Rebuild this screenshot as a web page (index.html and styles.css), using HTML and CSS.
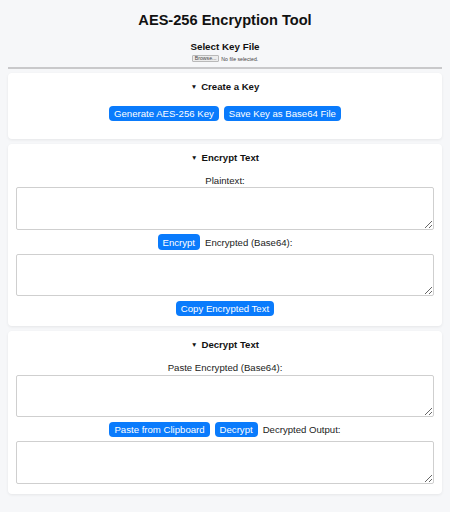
FILE: index.html
```html
<!DOCTYPE html>
<html lang="en">
<head>
<meta charset="utf-8">
<title>AES-256 Encryption Tool</title>
<link rel="stylesheet" href="styles.css">
</head>
<body>
<h1 class="title">AES-256 Encryption Tool</h1>
<h2 class="key-heading">Select Key File</h2>
<div class="file-row">
  <span class="file-btn">Browse...</span>
  <span class="file-status">No file selected.</span>
</div>
<div class="rule"></div>

<details class="card" open>
  <summary class="card-title">Create a Key</summary>
  <div class="row row-create">
    <button class="btn">Generate AES-256 Key</button>
    <button class="btn">Save Key as Base64 File</button>
  </div>
</details>

<details class="card" open>
  <summary class="card-title">Encrypt Text</summary>
  <div class="label">Plaintext:</div>
  <textarea class="box"></textarea>
  <div class="row">
    <button class="btn">Encrypt</button>
    <span class="inline-label">Encrypted (Base64):</span>
  </div>
  <textarea class="box box-after"></textarea>
  <div class="row">
    <button class="btn">Copy Encrypted Text</button>
  </div>
</details>

<details class="card" open>
  <summary class="card-title">Decrypt Text</summary>
  <div class="label">Paste Encrypted (Base64):</div>
  <textarea class="box"></textarea>
  <div class="row">
    <button class="btn">Paste from Clipboard</button>
    <button class="btn">Decrypt</button>
    <span class="inline-label">Decrypted Output:</span>
  </div>
  <textarea class="box box-after"></textarea>
</details>
</body>
</html>
```
FILE: styles.css
```css
html, body {
  margin: 0;
  padding: 0;
}
body {
  background: #f6f7f9;
  padding: 0 8px 8px;
  font-family: "Liberation Sans", Arial, sans-serif;
  font-size: 9.6px;
  color: #111;
}
.title {
  font-size: 14.6px;
  line-height: 17px;
  margin: 12px 0 0;
  text-align: center;
  font-weight: bold;
  color: #111;
}
.key-heading {
  font-size: 9.8px;
  line-height: 11px;
  margin: 11.5px 0 0;
  text-align: center;
  font-weight: bold;
  color: #111;
}
.file-row {
  margin-top: 3.5px;
  display: flex;
  justify-content: center;
  align-items: center;
  gap: 2px;
  font-size: 5.2px;
  line-height: 6px;
  height: 7px;
}
.file-btn {
  border: 1px solid #b9b9b9;
  background: #ececec;
  border-radius: 1px;
  padding: 0 2px;
  color: #444;
  line-height: 5px;
}
.file-status {
  color: #444;
}
.rule {
  margin-top: 5.3px;
  height: 2px;
  background: #c9c9cb;
}
.card {
  display: block;
  background: #fff;
  border-radius: 4px;
  box-shadow: 0 1px 3px rgba(0, 0, 0, 0.07);
  padding: 8px 8px 10px;
  margin-top: 5px;
}
.card:first-of-type {
  margin-top: 4px;
}
.card-title {
  display: block;
  list-style: none;
  font-weight: bold;
  line-height: 11.5px;
  height: 11.5px;
  text-align: center;
  cursor: pointer;
  color: #111;
}
.card-title::-webkit-details-marker {
  display: none;
}
.card-title::before {
  content: "\25BC";
  display: inline-block;
  font-size: 6.5px;
  line-height: 6px;
  margin-right: 4px;
  vertical-align: 1px;
}
.row {
  display: flex;
  justify-content: center;
  align-items: center;
  gap: 5px;
  margin-top: 4.6px;
}
.row-create {
  margin: 13.2px 0 8px;
}
.btn {
  background: #0a7bfc;
  color: #fff;
  border: none;
  border-radius: 4px;
  font-family: "Liberation Sans", Arial, sans-serif;
  font-size: 9.6px;
  line-height: 11px;
  padding: 2.2px 5px;
  margin: 0;
  cursor: pointer;
}
.label {
  margin-top: 10.7px;
  line-height: 11.5px;
  text-align: center;
  color: #222;
}
.inline-label {
  color: #222;
}
.box {
  display: block;
  box-sizing: border-box;
  width: 100%;
  height: 42.4px;
  margin: 1.4px 0 0;
  border: 1px solid #cfcfcf;
  border-radius: 2px;
  background: #fff;
  font-family: "Liberation Sans", Arial, sans-serif;
  font-size: 9.6px;
}
.box-after {
  margin-top: 4.3px;
}
```
